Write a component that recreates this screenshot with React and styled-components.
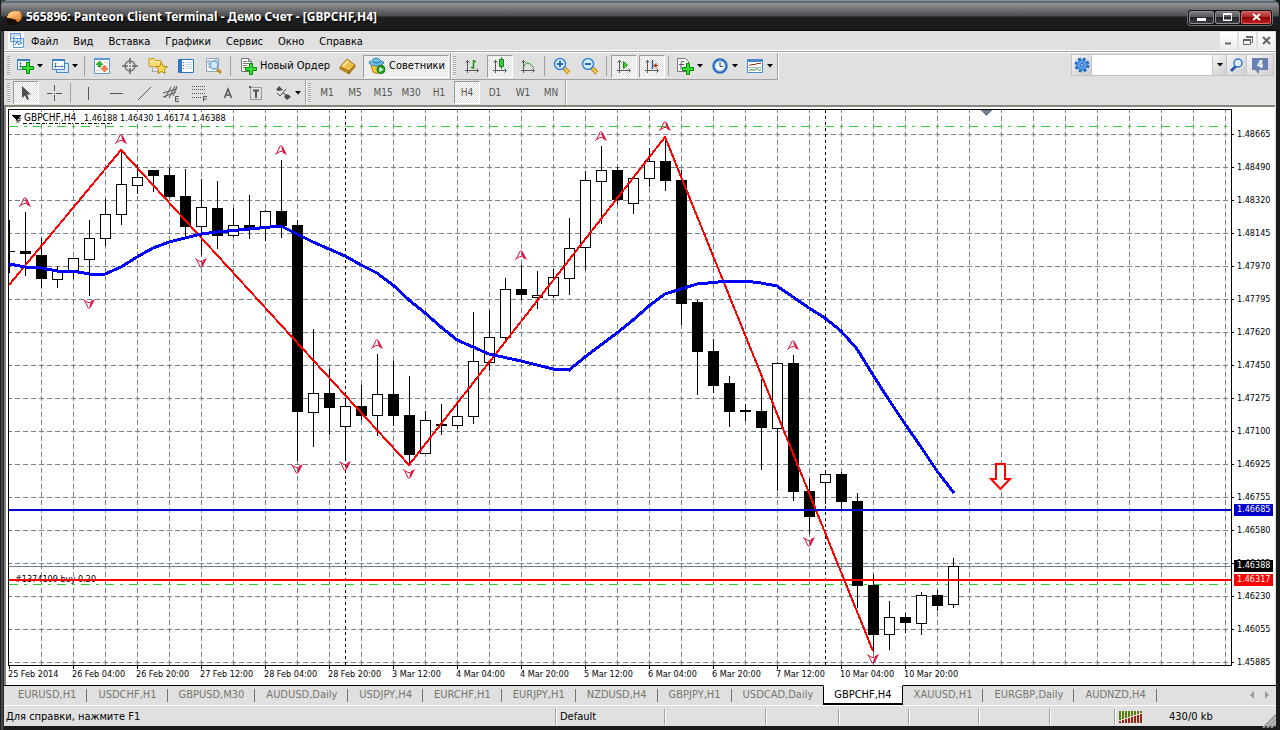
import styled, { createGlobalStyle, css } from "styled-components";

const GlobalStyle = createGlobalStyle`
  * {
    box-sizing: border-box;
  }

  body {
    margin: 0;
    background: #17181a;
    color: #000;
    font-family: "DejaVu Sans Condensed", "DejaVu Sans", sans-serif;
    font-size: 11px;
    line-height: 14px;
  }

  button,
  input {
    margin: 0;
    padding: 0;
    border: 0;
    background: none;
    color: inherit;
    font: inherit;
  }

  svg {
    display: block;
    flex: none;
  }
`;

const Window = styled.div`
  display: flex;
  flex-direction: column;
  height: 100vh;
  min-height: 480px;
  padding: 0 4px 4px;
  overflow: hidden;
  background: linear-gradient(90deg, #0c0d0e, #55585c 2px, #191a1c 4px, #191a1c);
`;

const TitleBar = styled.header`
  display: flex;
  align-items: center;
  height: 31px;
  flex: none;
  margin: 0 -3px;
  padding: 3px 7px 0 6px;
  border-radius: 6px 6px 0 0;
  background: linear-gradient(
    #97a5b8 0,
    #4a4d52 2px,
    #8f9093 3px,
    #8f9093 4px,
    #6b6c6f 10px,
    #4b4c4f 16px,
    #1d1e20 17px,
    #1a1b1d 29px,
    #050506 31px
  );
`;

const Title = styled.h1`
  flex: 1;
  margin: 0 0 0 4px;
  color: #fff;
  font: bold 12px/16px "Noto Sans", sans-serif;
  text-shadow: 1px 1px 1px #000;
  white-space: nowrap;
`;

const WindowButtons = styled.div`
  display: flex;
  gap: 1px;
  padding: 1px;
  border-radius: 3px;
  background: #111214;
  box-shadow: 0 0 0 1px #6f7074;
`;

const WindowButton = styled.button`
  display: grid;
  place-items: center;
  width: ${({ $close }) => ($close ? "30px" : "25px")};
  height: 13px;
  border: 1px solid ${({ $close }) => ($close ? "#d36a6a" : "#8e8f93")};
  border-radius: 2px;
  background: ${({ $close }) =>
    $close
      ? "linear-gradient(#c65a5a, #b02020 50%, #8c0606 50%, #c01818)"
      : "linear-gradient(#77787c, #55565a 50%, #26272a 50%, #3a3b3f)"};
`;

const Client = styled.div`
  display: flex;
  flex-direction: column;
  flex: 1;
  min-height: 0;
  background: #e0e0e0;
`;

const MenuBar = styled.nav`
  display: flex;
  align-items: center;
  height: 22px;
  flex: none;
  padding-left: 4px;
  border-bottom: 1px solid #fff;
  box-shadow: inset 0 -1px #a0a0a0, inset 0 -2px #fff;
`;

const MenuButton = styled.button`
  padding: 0 7px;
  margin-right: 1px;
`;

const MenuLogo = styled.span`
  display: grid;
  place-items: center;
  width: 16px;
  height: 17px;
  margin-bottom: 2px;
  background: #fff;
`;

const MdiButtons = styled.div`
  display: flex;
  gap: 2px;
  margin: 0 1px 2px auto;
`;

const MdiButton = styled.button`
  display: grid;
  place-items: center;
  width: 17px;
  height: 18px;
  background: linear-gradient(#fff, #ebebeb);
`;

const Toolbars = styled.div`
  flex: none;
`;

const ToolbarRow = styled.div`
  display: flex;
  align-items: flex-start;
  height: ${({ $tall }) => ($tall ? "27px" : "25px")};
  padding-left: 1px;
`;

const ToolGroup = styled.div`
  display: flex;
  align-items: center;
  height: 100%;
  border-right: 1px solid #a0a0a0;
  box-shadow: 1px 0 #fff;
  ${({ $line }) =>
    $line &&
    css`
      border-bottom: 1px solid #a0a0a0;
    `}
`;

const Grip = styled.span`
  width: 7px;
  height: 20px;
  border-left: 2px solid transparent;
  border-right: 2px solid transparent;
  background: repeating-linear-gradient(#a3a3a3 0 1px, #f4f4f4 1px 2px) padding-box;
`;

const Separator = styled.span`
  width: 6px;
  height: 20px;
  border-left: 2px solid transparent;
  border-right: 3px solid transparent;
  background: #a0a0a0 padding-box;
`;

const pressed = css`
  border: 1px solid;
  border-color: #9a9a9a #fff #fff #9a9a9a;
  background: repeating-conic-gradient(#fff 0 25%, #e0e0e0 0 50%) 0 0 / 2px 2px;
`;

const ToolButton = styled.button`
  display: flex;
  align-items: center;
  justify-content: center;
  width: 26px;
  height: 23px;
  margin: 0 1px;
  color: #555;
  font-size: 10px;
  ${({ $pressed }) => $pressed && pressed}
`;

const MenuToolButton = styled.button`
  display: flex;
  align-items: center;
  gap: 3px;
  width: 35px;
  height: 23px;
  padding-left: 4px;
`;

const TextToolButton = styled.button`
  display: flex;
  align-items: center;
  gap: 3px;
  height: 23px;
  margin: 0 1px;
  padding: 0 3px 0 4px;
  white-space: nowrap;
  ${({ $pressed }) => $pressed && pressed}
`;

const SearchBox = styled.div`
  display: flex;
  height: 22px;
  margin: 1px 2px 0 auto;
  padding: 1px;
  gap: 1px;
  background: #c4c4c4;
`;

const SearchInput = styled.input`
  width: 120px;
  background: #fff;
  outline: none;
`;

const SearchButton = styled.button`
  display: grid;
  place-items: center;
  width: ${({ $size }) => ({ small: "13px", wide: "26px" })[$size] || "19px"};
  background: linear-gradient(135deg, #f6f6f6, #cfcfcf);
`;

const ChartPanel = styled.main`
  display: grid;
  grid-template-columns: minmax(0, 1fr) 43px;
  grid-template-rows: minmax(0, 1fr) 19px;
  flex: 1;
  min-height: 0;
  margin-right: 1px;
  padding: 2px 0 0 2px;
  border-top: 2px solid #85857a;
  border-left: 2px solid #85857a;
  background: #fff;
  font-size: 9px;
  line-height: 11px;
`;

const Plot = styled.div`
  overflow: hidden;
  border: 1px solid #000;
`;

const PriceAxis = styled.div`
  position: relative;
  padding-top: 9px;
  overflow: hidden;
`;

const PriceLabel = styled.div`
  display: flex;
  align-items: center;
  height: 33px;
  gap: 3px;

  &::before {
    content: "";
    width: 2px;
    height: 1px;
    background: #000;
  }
`;

const PriceTag = styled.div`
  position: absolute;
  left: 2px;
  right: 2px;
  top: ${({ $y }) => $y}px;
  height: 12px;
  padding-left: 3px;
  background: ${({ $color }) => $color};
  color: #fff;
`;

const TimeAxis = styled.div`
  display: flex;
  overflow: hidden;
`;

const TimeLabel = styled.div`
  width: 64px;
  flex: none;
  white-space: nowrap;

  &::before {
    content: "";
    display: block;
    width: 1px;
    height: 3px;
    margin-left: 1px;
    background: #000;
  }
`;

const TabStrip = styled.div`
  display: flex;
  align-items: flex-start;
  height: 21px;
  flex: none;
  padding-left: 3px;
  border-top: 1px solid #000;
  border-bottom: 1px solid #fff;
`;

const Tab = styled.button`
  height: 19px;
  margin-top: -1px;
  padding: 0 11px;
  color: #76766c;
  white-space: nowrap;
  background: linear-gradient(#76766c, #76766c) right 4px / 1px 13px no-repeat;
  ${({ $active }) =>
    $active &&
    css`
      margin-left: -1px;
      padding: 0 10px;
      border: 1px solid #000;
      border-top-color: #fff;
      background: #fff;
      color: #000;
      box-shadow: 0 1px #000;
    `}
`;

const TabArrows = styled.div`
  display: flex;
  gap: 11px;
  margin: 5px 7px 0 auto;
`;

const StatusBar = styled.footer`
  display: flex;
  height: 20px;
  flex: none;
  padding: 3px 0 1px;
`;

const StatusCell = styled.div`
  display: flex;
  align-items: center;
  gap: 26px;
  width: ${({ $width }) => ($width ? `${$width}px` : "auto")};
  flex: ${({ $width }) => ($width ? "none" : "1")};
  padding: 0 4px;
  white-space: nowrap;

  & + & {
    border-left: 1px solid #a0a0a0;
    box-shadow: inset 1px 0 #fff;
  }

  &:first-child {
    padding-left: 2px;
  }

  &:last-child svg:last-child {
    margin: 0 -4px -3px auto;
    align-self: flex-end;
  }
`;

const MENUS = ["Файл", "Вид", "Вставка", "Графики", "Сервис", "Окно", "Справка"];
const PERIODS = ["M1", "M5", "M15", "M30", "H1", "H4", "D1", "W1", "MN"];

const PRICES = [
  "1.48665", "1.48490", "1.48320", "1.48145", "1.47970", "1.47795",
  "1.47620", "1.47450", "1.47275", "1.47100", "1.46925", "1.46755",
  "1.46580", "1.46405", "1.46230", "1.46055", "1.45885",
];

const TIMES = [
  "25 Feb 2014", "26 Feb 04:00", "26 Feb 20:00", "27 Feb 12:00",
  "28 Feb 04:00", "28 Feb 20:00", "3 Mar 12:00", "4 Mar 04:00",
  "4 Mar 20:00", "5 Mar 12:00", "6 Mar 04:00", "6 Mar 20:00",
  "7 Mar 12:00", "10 Mar 04:00", "10 Mar 20:00",
];

const TABS = [
  "EURUSD,H1", "USDCHF,H1", "GBPUSD,M30", "AUDUSD,Daily", "USDJPY,H4",
  "EURCHF,H1", "EURJPY,H1", "NZDUSD,H4", "GBPJPY,H1", "USDCAD,Daily",
  "GBPCHF,H4", "XAUUSD,H1", "EURGBP,Daily", "AUDNZD,H4",
];

const STATUS_WIDTHS = [101, 73, 70, 70, 71, 65];

// [high, body top, body bottom, low, falling], one bar every 16px
const CANDLES = [
  [220, 251, 252, 273, 1], [212, 251, 254, 276, 1], [238, 255, 279, 288, 1],
  [266, 271, 279, 288, 0], [258, 258, 271, 279, 0], [220, 238, 259, 296, 0],
  [199, 214, 238, 246, 0], [150, 184, 214, 225, 0], [164, 177, 185, 194, 0],
  [170, 170, 176, 192, 1], [168, 175, 197, 198, 1], [169, 196, 227, 236, 1],
  [179, 207, 226, 255, 0], [181, 208, 236, 249, 1], [208, 225, 235, 237, 0],
  [195, 225, 228, 239, 1], [210, 211, 226, 241, 0], [160, 211, 226, 238, 1],
  [220, 225, 412, 461, 1], [329, 393, 412, 447, 0], [369, 393, 408, 435, 1],
  [400, 406, 426, 460, 0], [385, 406, 416, 420, 1], [354, 394, 415, 436, 0],
  [361, 394, 416, 426, 1], [376, 415, 455, 465, 1], [411, 420, 453, 453, 0],
  [404, 424, 426, 435, 1], [404, 416, 425, 429, 0], [312, 361, 416, 424, 0],
  [310, 337, 362, 371, 0], [278, 289, 337, 340, 0], [265, 289, 295, 300, 1],
  [271, 295, 297, 309, 0], [269, 277, 295, 298, 0], [218, 248, 278, 295, 0],
  [171, 180, 247, 270, 0], [146, 170, 181, 224, 0], [167, 170, 200, 204, 1],
  [178, 178, 203, 214, 0], [148, 161, 178, 187, 0], [137, 161, 181, 191, 1],
  [170, 180, 304, 325, 1], [300, 302, 352, 395, 1], [339, 351, 386, 393, 1],
  [376, 383, 412, 427, 1], [404, 410, 412, 421, 1], [379, 411, 428, 470, 1],
  [362, 363, 428, 491, 0], [355, 363, 492, 501, 1], [479, 491, 517, 534, 1],
  [470, 474, 482, 504, 0], [472, 474, 502, 510, 1], [493, 501, 586, 608, 1],
  [574, 585, 635, 652, 1], [601, 617, 634, 650, 0], [613, 617, 623, 633, 1],
  [592, 595, 623, 635, 0], [590, 595, 606, 611, 1], [558, 566, 604, 608, 0],
];

const MOVING_AVERAGE =
  "9,264 25,267 41,268 57,271 73,271 89,274 105,274 121,267 137,257 153,248 169,242 185,238 201,234 217,232 249,229 281,226 297,234 313,242 329,249 345,256 361,265 377,273 393,285 409,300 425,313 441,327 457,340 473,347 489,354 521,361 553,369 569,370 585,357 601,345 617,333 633,320 649,306 665,294 681,289 697,284 729,281 745,281 761,283 777,286 793,297 809,308 825,318 841,331 857,349 873,375 889,400 905,424 921,447 937,471 954,493";

const ZIGZAG = "9,285 121,150 409,465 665,137 873,651";

const FRACTALS_UP = [
  [25, 202], [121, 139], [281, 150], [377, 344],
  [521, 255], [601, 136], [665, 126], [793, 345],
];

const FRACTALS_DOWN = [
  [89, 304], [201, 263], [297, 469], [345, 466],
  [409, 474], [809, 542], [873, 659],
];

function Fractal({ x, y, down }) {
  return (
    <g
      transform={`translate(${x} ${y}) scale(1 ${down ? -1 : 1})`}
      fill="#dc143c"
      stroke="#dc143c"
    >
      <path d="M-.5-4.5-4.5 3.5M-6 4.5l5-3h2" fill="none" />
      <path d="M0-5 2-3 6 5 2 3 1 0z" stroke="none" />
    </g>
  );
}

function Candle({ x, bar }) {
  const [high, top, bottom, low, falling] = bar;
  return (
    <g fill={falling ? "#000" : "#fff"} stroke="#000">
      <path d={`M${x + 0.5} ${high}V${low}`} />
      <rect x={x - 4.5} y={top + 0.5} width="10" height={Math.max(bottom - top - (falling ? 1 : 0), 0.1)} />
    </g>
  );
}

function Chart() {
  const rows = PRICES.map((_, i) => 134.5 + i * 33);
  const columns = Array.from({ length: 60 }, (_, i) => 41.5 + i * 32);

  return (
    <svg width="100%" height="100%" shapeRendering="crispEdges" role="img" aria-label="GBPCHF,H4">
      <g transform="translate(-9 -110)">
        <g stroke="#708090" strokeDasharray="5 3">
          {rows.map((y) => (
            <path key={y} d={`M7 ${y}H3000`} />
          ))}
          {columns.map((x) => (
            <path key={x} d={`M${x} 108V2000`} />
          ))}
        </g>
        <path d="M345.5 110V2000M825.5 110V2000" stroke="#000" strokeDasharray="3 3" />
        <path d="M9 566.5H3000" stroke="#708090" />
        <path d="M9 126.5H3000M9 584.5H3000" stroke="#32cd32" strokeDasharray="9 6 3 6" />
        <path d="M10 112h216v11H10z" fill="#fff" />
        <path d="M23 123.500h89" stroke="#000" strokeDasharray="4 2 3 1 1 2" />
        <path d="M12 115h9l-4.500 5z" />
        <text x="15" y="123">#</text>
        <text x="24" y="121" fontSize="10">GBPCHF,H4</text>
        <text x="84" y="121">1.46188 1.46430 1.46174 1.46388</text>
        <path d="M980 110h12l-6 6z" fill="#708090" />
        {CANDLES.map((bar, i) => (
          <Candle key={i} x={9 + i * 16} bar={bar} />
        ))}
        <text x="15" y="582">#1374109 buy 0.20</text>
        <polyline points={ZIGZAG} fill="none" stroke="#f00" strokeWidth="2" />
        <polyline points={MOVING_AVERAGE} fill="none" stroke="#00f" strokeWidth="3" />
        <path d="M9 510H3000" stroke="#0000cd" strokeWidth="2" />
        <path d="M9 580H3000" stroke="#f00" strokeWidth="2" />
        <g shapeRendering="auto">
          {FRACTALS_UP.map(([x, y]) => (
            <Fractal key={x} x={x} y={y} />
          ))}
          {FRACTALS_DOWN.map(([x, y]) => (
            <Fractal key={x} x={x} y={y} down />
          ))}
          <path
            d="M996 464h9v15h5l-9.500 10-9.500-10h5z"
            fill="#fff"
            stroke="#f00"
            strokeWidth="2"
          />
        </g>
      </g>
    </svg>
  );
}

function Icon({ size = 18, children }) {
  return (
    <svg width={size} height={size} viewBox={`0 0 ${size} ${size}`} fill="none" aria-hidden="true">
      {children}
    </svg>
  );
}

function Caret() {
  return (
    <svg width="6" height="4" aria-hidden="true">
      <path d="M0 0h6L3 3.500z" />
    </svg>
  );
}

function Plus({ x, y }) {
  return (
    <path
      transform={`translate(${x} ${y})`}
      d="M4 0h3v4h4v3H7v4H4V7H0V4h4z"
      fill="#35e035"
      stroke="#078a07"
    />
  );
}

function Axes() {
  return (
    <path
      d="M4.500 3v13M2 13.500h13M2.500 5.500l2-2 2 2M13.500 11.500l2 2-2 2"
      stroke="#5a5a5a"
    />
  );
}

function LogoIcon() {
  return (
    <Icon size={15}>
      <defs>
        <linearGradient id="logo" x1="0" y1="0" x2="1" y2="1">
          <stop offset="0" stopColor="#ffe0a0" />
          <stop offset=".5" stopColor="#f59a45" />
          <stop offset="1" stopColor="#c8651c" />
        </linearGradient>
      </defs>
      <path d="M0 5q2-4 6-4h6q3 1 3 6-1 8-7 8H3q-3 0-3-4z" fill="#1a0d06" />
      <path d="M0 7q1-6 7-6h5q3 1 3 6-1 5-5 5-1-3-4-3-3-1-6-1z" fill="url(#logo)" />
      <path d="M4 3v4M6 2v5M8 2v6M10 2v7M12 2v7" stroke="#ffe8bc" strokeWidth=".5" />
    </Icon>
  );
}

function ChartsIcon() {
  return (
    <Icon size={15}>
      <path d="M1.500.5h10v8h-10zM4.500 5.500h10v9h-10z" fill="#fff" stroke="#5f96e0" />
      <path d="M1.500 2h10M4.500 7h10" stroke="#5f96e0" strokeDasharray="2 1" />
      <path d="M3 6V4m2 1V3M6 12l2-3 2 3 2-3 1 2" stroke="#3475d0" />
    </Icon>
  );
}

function NewChartIcon() {
  return (
    <Icon>
      <path d="M1.500 2.500h12v10h-12z" fill="#eef6ff" stroke="#3d82bd" />
      <path d="M1 3h13" stroke="#3d82bd" strokeWidth="2" />
      <path d="M4.500 5v6M3 9.500h5M3.500 6.500h2M11 6v3" stroke="#71849a" />
      <Plus x={6.5} y={5.5} />
    </Icon>
  );
}

function ProfilesIcon() {
  return (
    <Icon>
      <path d="M5.500 6.500h12v9h-12z" fill="#d9eafa" stroke="#4b86ba" />
      <path d="M1.500 2.500h12v10h-12z" fill="#f7fbff" stroke="#3d82bd" />
      <path d="M1 3h13" stroke="#3d82bd" strokeWidth="2" />
      <path d="M4.500 6v5M3 9.500h9M3.500 7l1-1 1 1M11 8.500l1 1-1 1" stroke="#5580ab" />
    </Icon>
  );
}

function MarketIcon() {
  return (
    <Icon>
      <path d="M1.500 1.500h15v15h-15z" fill="#fff" stroke="#5a9bd8" />
      <path d="M1 2h16" stroke="#5a9bd8" strokeWidth="2" />
      <path d="M3 13.500h5M11 5.500h4" stroke="#ccd6e0" />
      <path d="m6.500 4 3.500 3.500H8V10H5V7.500H3z" fill="#2db82d" stroke="#118411" strokeWidth=".6" />
      <path d="M11.500 15 8 11.500h2V9h3v2.500h2z" fill="#ff8a4a" stroke="#c8400c" strokeWidth=".6" />
    </Icon>
  );
}

function TargetIcon() {
  return (
    <Icon>
      <circle cx="9" cy="9" r="5" stroke="#747474" strokeWidth="1.500" />
      <path d="M9 1v6m0 4v6M1 9h6m4 0h6" stroke="#676767" strokeWidth="1.500" />
      <circle cx="9" cy="9" r="1" fill="#888" />
    </Icon>
  );
}

function NavigatorIcon() {
  return (
    <Icon size={20}>
      <path d="M1 2.500h5l1.500 2H13v6H1z" fill="#f6dd7a" stroke="#c79a22" />
      <path d="M2 5.500h10" stroke="#fff3b8" />
      <path d="M4.500 12v4m0-.5h6" stroke="#777" strokeDasharray="1 1" />
      <path d="m13.500 6.500 1.800 3.700 4 .5-3 2.800.8 4-3.600-2-3.600 2 .8-4-3-2.800 4-.5z" fill="#ffd94c" stroke="#b9820e" />
    </Icon>
  );
}

function TerminalIcon() {
  return (
    <Icon>
      <path d="M1.500 2.500h15v13h-15z" fill="#fff" stroke="#2f74b8" />
      <path d="M2 3h3v12H2z" fill="#2f78c8" />
      <path d="M8 5.500h7M8 7.500h7M8 9.500h7M8 11.500h7" stroke="#c2d5e6" />
      <path d="M6 5.500h1M6 8.500h1M6 11.500h1" stroke="#c33" />
    </Icon>
  );
}

function TesterIcon() {
  return (
    <Icon>
      <path d="M1.500 1.500h12v13h-12z" fill="#edf4fa" stroke="#8fa6ba" />
      <path d="M4 3v9M7 4v8M11 2v7M2 5h11" stroke="#8f9daa" strokeDasharray="2 1" />
      <path d="m12 12 4 4" stroke="#c78e1e" strokeWidth="3" />
      <circle cx="9" cy="8" r="4" fill="#cfe8fb" fillOpacity=".85" stroke="#6aa6da" strokeWidth="1.500" />
    </Icon>
  );
}

function NewOrderIcon() {
  return (
    <Icon>
      <path d="M2.500 1.500h7l3 3v10h-10z" fill="#fff" stroke="#777" />
      <path d="M9.500 1.500v3h3M4 4.500h4M4 6.500h7M4 8.500h4M4 10.500h3" stroke="#777" />
      <Plus x={6.5} y={6.5} />
    </Icon>
  );
}

function BookIcon() {
  return (
    <Icon>
      <path d="m1 10 7-8 8 6-6 6z" fill="#f0c24c" stroke="#a36d0c" />
      <path d="m1 10 9 5v2l-9-5zm9 5 6-7v2l-6 7z" fill="#d89a22" stroke="#8c5a08" strokeWidth=".7" />
      <path d="m4 9 5-5" stroke="#ffe9a0" strokeWidth="2" />
    </Icon>
  );
}

function AdvisorIcon() {
  return (
    <Icon>
      <path d="M3 8h12l-2 7q-4 3-8 0z" fill="#f5c63a" stroke="#b3830e" />
      <path d="M1 6q0-2 3-2 1-3 4-3t5 3q3 0 3 2-3 3-8 3T1 6z" fill="#6fbfe6" stroke="#3a88b8" />
      <path d="M5 5q4 2 8 0" stroke="#2a79aa" />
      <circle cx="13" cy="12.500" r="4" fill="#25a825" stroke="#0d790d" />
      <path d="m11.500 10 4 2.500-4 2.500z" fill="#fff" />
    </Icon>
  );
}

function BarsIcon() {
  return (
    <Icon>
      <Axes />
      <path d="M10.500 3v9M10 4.500h3M8 10.500h3" stroke="#1f8f1f" strokeWidth="1.500" />
    </Icon>
  );
}

function CandlesIcon() {
  return (
    <Icon>
      <Axes />
      <path d="M10.500 0v12" stroke="#168116" />
      <path d="M8.500 2.500h4v7h-4z" fill="#35d035" stroke="#168116" />
    </Icon>
  );
}

function LineIcon() {
  return (
    <Icon>
      <Axes />
      <path d="M4 11q3-6 5-5 2 0 6 5" stroke="#2f9a2f" />
    </Icon>
  );
}

function ZoomIcon({ plus }) {
  return (
    <Icon>
      <path d="m11 11 5 5" stroke="#b98014" strokeWidth="4" />
      <path d="m11 11 5 5" stroke="#f6d353" strokeWidth="2" />
      <circle cx="7" cy="7" r="5.500" fill="#d3ecfd" stroke="#3a86cf" strokeWidth="1.500" />
      <path d={plus ? "M4 7h6M7 4v6" : "M4 7h6"} stroke="#2a6bad" strokeWidth="2" />
    </Icon>
  );
}

function ScrollIcon() {
  return (
    <Icon>
      <Axes />
      <path d="m8.500 4.500 4 3.500-4 3.500z" fill="#3fd03f" stroke="#168116" />
    </Icon>
  );
}

function ShiftIcon() {
  return (
    <Icon>
      <Axes />
      <path d="M9.500 3v9" stroke="#1d62a3" strokeWidth="1.500" />
      <path d="M10 8.500h5" stroke="#c3390e" />
      <path d="m10.500 8.500 3-3v6z" fill="#c3390e" />
    </Icon>
  );
}

function IndicatorsIcon() {
  return (
    <Icon>
      <path d="M1.500 1.500h8l3 3v10h-11z" fill="#fff" stroke="#777" />
      <path d="M8 4.500q-3-1-3 2v6M3 7.500h5" stroke="#555" />
      <Plus x={6.5} y={6.5} />
    </Icon>
  );
}

function ClockIcon() {
  return (
    <Icon>
      <circle cx="9" cy="9" r="6.500" fill="#f3f8fc" stroke="#2a6fc0" strokeWidth="2.500" />
      <circle cx="9" cy="9" r="5" stroke="#9cc4ea" />
      <path d="M9 5v4.500h3" stroke="#444" />
    </Icon>
  );
}

function TemplateIcon() {
  return (
    <Icon>
      <path d="M1.500 2.500h15v13h-15z" fill="#fff" stroke="#4a88c8" />
      <path d="M1 3.500h16" stroke="#4a88c8" strokeWidth="3" />
      <path d="M2 10.500h14" stroke="#9db9d4" />
      <path d="m3 8.500 3-1h3l2-1h4" stroke="#a33318" />
      <path d="m3 13.500 3-1 2 1 3-2 2 2 2-1" stroke="#279427" />
    </Icon>
  );
}

function CursorIcon() {
  return (
    <Icon>
      <path d="M5 2v12l3-2.500 2 4.500 2-1-2-4.500h4z" fill="#505050" />
    </Icon>
  );
}

function StrokeIcon({ d }) {
  return (
    <Icon>
      <path d={d} stroke="#555" />
    </Icon>
  );
}

function ChannelIcon() {
  return (
    <Icon size={20}>
      <path d="m3 15 6-11M7 15l6-12M11 13l4-10M1 10l14-4M1 14l13-5" stroke="#555" />
      <path d="M17 13.500h-3.500v5H17M13.500 16h3" stroke="#555" />
    </Icon>
  );
}

function FibonacciIcon() {
  return (
    <Icon size={20}>
      <path d="M2 3.500h14M2 6.500h14M2 10.500h14M2 14.500h10" stroke="#555" strokeDasharray="1 1" />
      <path d="M17 13.500h-3.500v5M13.500 16h3" stroke="#555" />
    </Icon>
  );
}

function LetterIcon() {
  return (
    <Icon>
      <path d="m5.500 14 3.500-9 3.500 9M7 11h4" stroke="#555" strokeWidth="1.500" />
    </Icon>
  );
}

function LabelIcon() {
  return (
    <Icon>
      <path d="M3.500 3.500h11v12h-11z" stroke="#555" strokeDasharray="1 1" />
      <path d="M6 6.500h6M9 6v8" stroke="#555" strokeWidth="2" />
      <path d="M2 2h2v2H2z" fill="#555" />
    </Icon>
  );
}

function ArrowsIcon() {
  return (
    <Icon>
      <path d="m5 2 4 4-4 1-3-1zM12 10l3 1 2 2-4 3-3-3z" fill="#4c4c4c" />
      <path d="m3 9 3 3 6-7M9 9l4 3" stroke="#4c4c4c" />
    </Icon>
  );
}

function GearIcon() {
  return (
    <Icon size={16}>
      <circle cx="8" cy="8" r="6" stroke="#2a6cc8" strokeWidth="3" strokeDasharray="3 1.700" />
      <circle cx="8" cy="8" r="5" fill="#5aa0ee" stroke="#2a6cc8" />
      <circle cx="8" cy="8" r="1.500" fill="#dceaf8" stroke="#1e5cb8" />
    </Icon>
  );
}

function SearchIcon() {
  return (
    <Icon size={16}>
      <path d="m2 14 5-5" stroke="#2a5cb0" strokeWidth="3" />
      <circle cx="9" cy="6" r="4" fill="#e4effa" stroke="#3a74d0" strokeWidth="1.500" />
    </Icon>
  );
}

function MessagesIcon() {
  return (
    <svg width="18" height="17" viewBox="0 0 18 17">
      <path d="M1 1h16v12H8v4l-4-4H1z" fill="#6780b0" />
      <text x="6" y="11" fill="#fff" fontSize="10" fontWeight="bold">4</text>
    </svg>
  );
}

function StatusIcon() {
  return (
    <svg width="24" height="12" viewBox="0 0 24 12" aria-hidden="true">
      <path d="M1 0v9M4 0v8M7 0v7M10 0v6M13 0v5M16 0v4M19 0v3M22 0v2" stroke="#5b7d0c" strokeWidth="2" />
      <path d="M1 10v2M4 9v3M7 8v4M10 7v5M13 6v6M16 5v7M19 4v8M22 3v9" stroke="#9b2413" strokeWidth="2" />
    </svg>
  );
}

function Tool({ label, icon, active }) {
  return (
    <ToolButton aria-label={label} $pressed={active}>
      {icon}
    </ToolButton>
  );
}

function MenuTool({ label, icon }) {
  return (
    <MenuToolButton aria-label={label}>
      {icon}
      <Caret />
    </MenuToolButton>
  );
}

function MainToolbar() {
  return (
    <ToolbarRow $tall>
      <ToolGroup $line>
        <Grip />
        <MenuTool label="Новый график" icon={<NewChartIcon />} />
        <MenuTool label="Профили" icon={<ProfilesIcon />} />
        <Separator />
        <Tool label="Обзор рынка" icon={<MarketIcon />} />
        <Tool label="Окно данных" icon={<TargetIcon />} />
        <Tool label="Навигатор" icon={<NavigatorIcon />} />
        <Tool label="Терминал" icon={<TerminalIcon />} />
        <Tool label="Тестер стратегий" icon={<TesterIcon />} />
        <Separator />
        <TextToolButton>
          <NewOrderIcon />
          Новый Ордер
        </TextToolButton>
        <Tool label="MetaEditor" icon={<BookIcon />} />
        <TextToolButton $pressed>
          <AdvisorIcon />
          Советники
        </TextToolButton>
      </ToolGroup>
      <ToolGroup $line>
        <Grip />
        <Tool label="Бары" icon={<BarsIcon />} />
        <Tool label="Японские свечи" icon={<CandlesIcon />} active />
        <Tool label="Линия" icon={<LineIcon />} />
        <Separator />
        <Tool label="Увеличить" icon={<ZoomIcon plus />} />
        <Tool label="Уменьшить" icon={<ZoomIcon />} />
        <Separator />
        <Tool label="Автопрокрутка" icon={<ScrollIcon />} active />
        <Tool label="Сдвиг графика" icon={<ShiftIcon />} active />
        <Separator />
        <MenuTool label="Индикаторы" icon={<IndicatorsIcon />} />
        <MenuTool label="Периоды" icon={<ClockIcon />} />
        <MenuTool label="Шаблоны" icon={<TemplateIcon />} />
      </ToolGroup>
      <SearchBox>
        <SearchButton aria-label="Настройки поиска">
          <GearIcon />
        </SearchButton>
        <SearchInput aria-label="Поиск" />
        <SearchButton aria-label="История" $size="small">
          <Caret />
        </SearchButton>
        <SearchButton aria-label="Найти">
          <SearchIcon />
        </SearchButton>
        <SearchButton aria-label="Сообщения" $size="wide">
          <MessagesIcon />
        </SearchButton>
      </SearchBox>
    </ToolbarRow>
  );
}

function DrawingToolbar() {
  return (
    <ToolbarRow>
      <ToolGroup>
        <Grip />
        <Tool label="Курсор" icon={<CursorIcon />} active />
        <Tool label="Перекрестие" icon={<StrokeIcon d="M9.500 1v6m0 4v6M2 9.500h5m4 0h6M9 9.500h1" />} />
        <Separator />
        <Tool label="Вертикальная линия" icon={<StrokeIcon d="M9.500 3v13" />} />
        <Tool label="Горизонтальная линия" icon={<StrokeIcon d="M3 9.500h13" />} />
        <Tool label="Трендовая линия" icon={<StrokeIcon d="m3 16 13-13" />} />
        <Tool label="Канал" icon={<ChannelIcon />} />
        <Tool label="Фибоначчи" icon={<FibonacciIcon />} />
        <Tool label="Текст" icon={<LetterIcon />} />
        <Tool label="Метка" icon={<LabelIcon />} />
        <MenuTool label="Стрелки" icon={<ArrowsIcon />} />
      </ToolGroup>
      <ToolGroup>
        <Grip />
        {PERIODS.map((period) => (
          <ToolButton key={period} $pressed={period === "H4"}>
            {period}
          </ToolButton>
        ))}
      </ToolGroup>
    </ToolbarRow>
  );
}

export default function App() {
  return (
    <Window>
      <GlobalStyle />
      <TitleBar>
        <LogoIcon />
        <Title>565896: Panteon Client Terminal - Демо Счет - [GBPCHF,H4]</Title>
        <WindowButtons>
          <WindowButton aria-label="Свернуть">
            <svg width="9" height="8"><path d="M0 6.500h9" stroke="#fff" strokeWidth="3" /></svg>
          </WindowButton>
          <WindowButton aria-label="Развернуть">
            <svg width="9" height="8"><path d="M0 1h9v6.500H0" fill="none" stroke="#fff" strokeWidth="2" /><path d="M.5 1v6M8.500 1v6" stroke="#fff" /></svg>
          </WindowButton>
          <WindowButton aria-label="Закрыть" $close>
            <svg width="9" height="8"><path d="m1 1 7 6M8 1 1 7" stroke="#fff" strokeWidth="2" /></svg>
          </WindowButton>
        </WindowButtons>
      </TitleBar>
      <Client>
        <MenuBar>
          <MenuLogo>
            <ChartsIcon />
          </MenuLogo>
          {MENUS.map((menu) => (
            <MenuButton key={menu}>{menu}</MenuButton>
          ))}
          <MdiButtons>
            <MdiButton aria-label="Свернуть график">
              <svg width="9" height="9"><path d="M1 7.500h6" stroke="#666" strokeWidth="2" /></svg>
            </MdiButton>
            <MdiButton aria-label="Восстановить график">
              <svg width="10" height="9"><path d="M3 1h7M1 4h7" stroke="#666" strokeWidth="2" /><path d="M9.500 1v5.500H8M.5 3v5.500h7V3" fill="none" stroke="#666" /></svg>
            </MdiButton>
            <MdiButton aria-label="Закрыть график">
              <svg width="9" height="9"><path d="m1 1 7 7M8 1 1 8" stroke="#666" strokeWidth="2" /></svg>
            </MdiButton>
          </MdiButtons>
        </MenuBar>
        <Toolbars>
          <MainToolbar />
          <DrawingToolbar />
        </Toolbars>
        <ChartPanel>
          <Plot>
            <Chart />
          </Plot>
          <PriceAxis>
            {PRICES.map((price) => (
              <PriceLabel key={price}>{price}</PriceLabel>
            ))}
            <PriceTag $y={395} $color="#0000cd">1.46685</PriceTag>
            <PriceTag $y={451} $color="#000">1.46388</PriceTag>
            <PriceTag $y={465} $color="#f00">1.46317</PriceTag>
          </PriceAxis>
          <TimeAxis>
            {TIMES.map((time) => (
              <TimeLabel key={time}>{time}</TimeLabel>
            ))}
          </TimeAxis>
        </ChartPanel>
        <TabStrip>
          {TABS.map((tab) => (
            <Tab key={tab} $active={tab === "GBPCHF,H4"}>
              {tab}
            </Tab>
          ))}
          <TabArrows>
            <svg width="4" height="8"><path d="M4 0v8L0 4z" fill="#999" /></svg>
            <svg width="4" height="8"><path d="M0 0v8l4-4z" fill="#999" /></svg>
          </TabArrows>
        </TabStrip>
        <StatusBar>
          <StatusCell $width={551}>Для справки, нажмите F1</StatusCell>
          <StatusCell $width={109}>Default</StatusCell>
          {STATUS_WIDTHS.map((width, i) => (
            <StatusCell key={i} $width={width} />
          ))}
          <StatusCell>
            <StatusIcon />
            430/0 kb
            <svg width="14" height="14" aria-hidden="true">
              <path d="M1 14 14 1M5 14l9-9M9 14l5-5" stroke="#999" strokeWidth="2" />
            </svg>
          </StatusCell>
        </StatusBar>
      </Client>
    </Window>
  );
}
